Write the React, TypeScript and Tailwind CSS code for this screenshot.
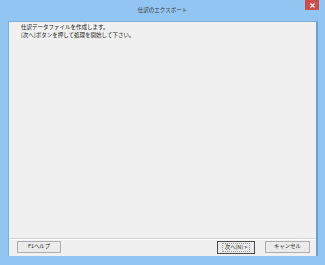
export default function App() {
  const font = "font-['Noto_Sans_CJK_JP','Noto_Sans',sans-serif]";
  return (
    <div className={`w-[325px] h-[265px] bg-[#92c5f2] flex flex-col relative ${font}`}>
      {/* Title bar */}
      <div className="h-[21px] flex items-center justify-center">
        <span className="text-[5.5px] text-[#3a3a3a] leading-none">仕訳のエクスポート</span>
      </div>
      <div className="absolute top-0 right-[6px] w-[14px] h-[10px] bg-[#c9504a] flex items-center justify-center">
        <svg width="5" height="5" viewBox="0 0 5 5" stroke="#fff" strokeWidth="1.1">
          <line x1="0.5" y1="0.5" x2="4.5" y2="4.5" />
          <line x1="4.5" y1="0.5" x2="0.5" y2="4.5" />
        </svg>
      </div>

      {/* Client area */}
      <div className="flex-1 ml-[8px] mr-[7px] mb-[9px] bg-[#f0f0f0] border-l border-t border-r-2 border-[#7fb0dc] border-r-[#6a9fd0] flex flex-col">
        <div className="flex-1 pl-[12px] pt-[1px] text-[5.5px] leading-[8px] text-[#1a1a1a]">
          <p>仕訳データファイルを作成します。</p>
          <p>[次へ]ボタンを押して処理を開始して下さい。</p>
        </div>
        <div className="border-t border-[#d4d4d4] shadow-[0_1px_0_#ffffff_inset] h-[18px] flex items-start pt-[2px] pl-[8px] pr-[6px] text-[5.4px] text-[#2a2a2a]">
          <button className="w-[44px] h-[12px] bg-[#ebebeb] border border-[#adadad] flex items-center justify-center leading-none">
            F1ヘルプ
          </button>
          <div className="flex-1" />
          <button className="w-[38px] h-[13px] bg-[#ebebeb] border border-[#4a4a4a] flex items-center justify-center leading-none">
            <span className="border border-dotted border-[#9a9a9a] px-[2px] py-[1px]">次へ(N) &gt;</span>
          </button>
          <button className="ml-[10px] w-[45px] h-[12px] bg-[#ebebeb] border border-[#adadad] flex items-center justify-center leading-none">
            キャンセル
          </button>
        </div>
      </div>
    </div>
  );
}
